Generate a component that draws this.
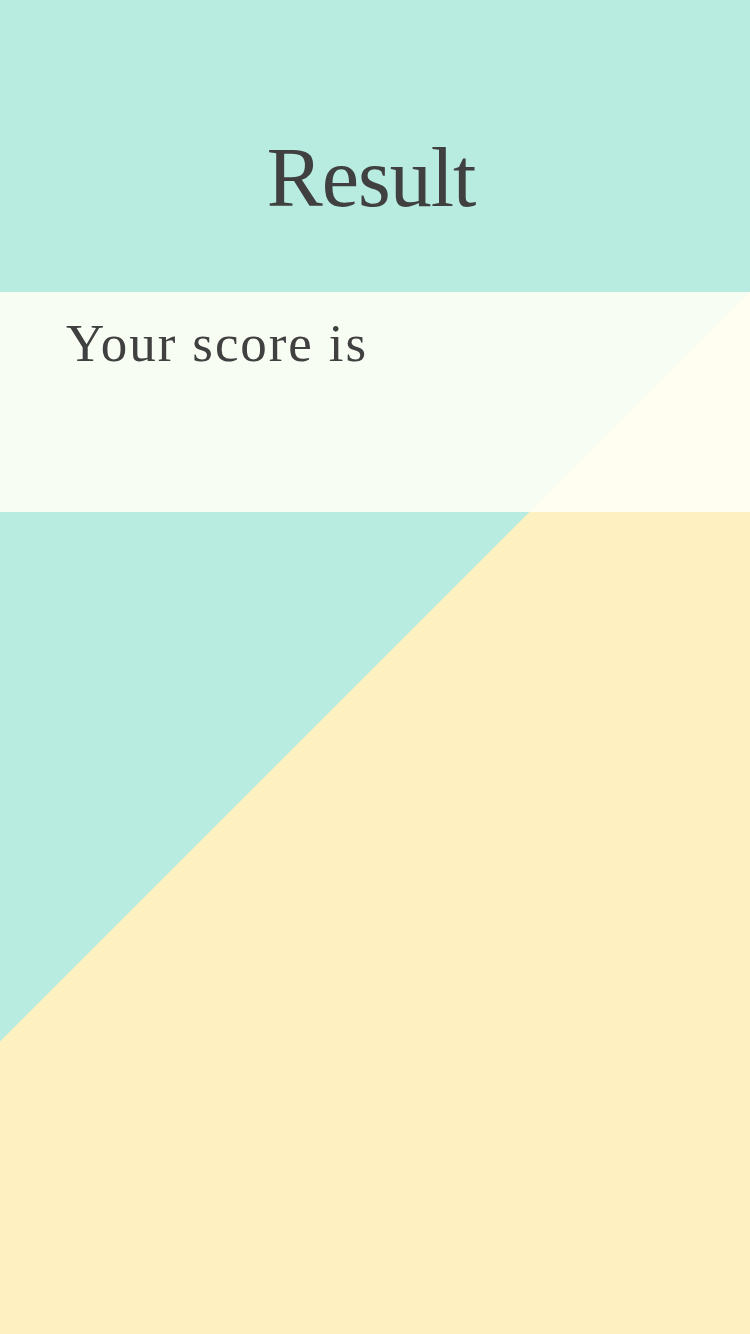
const App = () => {
  return (
    <div className="min-h-screen w-full bg-[linear-gradient(135deg,#b9ece1_50%,#fef0c0_50%)] font-['Liberation_Serif',serif] text-[#404040]">
      {/* Header */}
      <header className="h-[292px] pt-[128px] pr-[8px]">
        <h1 className="text-center text-[84px] leading-[100px] tracking-[-1px]">Result</h1>
      </header>

      {/* Score band */}
      <section className="h-[220px] bg-[rgba(255,255,246,0.9)] pl-[66px] pt-[21px]">
        <p className="text-[53px] leading-[60px] tracking-[1.9px]">Your score is</p>
      </section>
    </div>
  );
};

export default App;
